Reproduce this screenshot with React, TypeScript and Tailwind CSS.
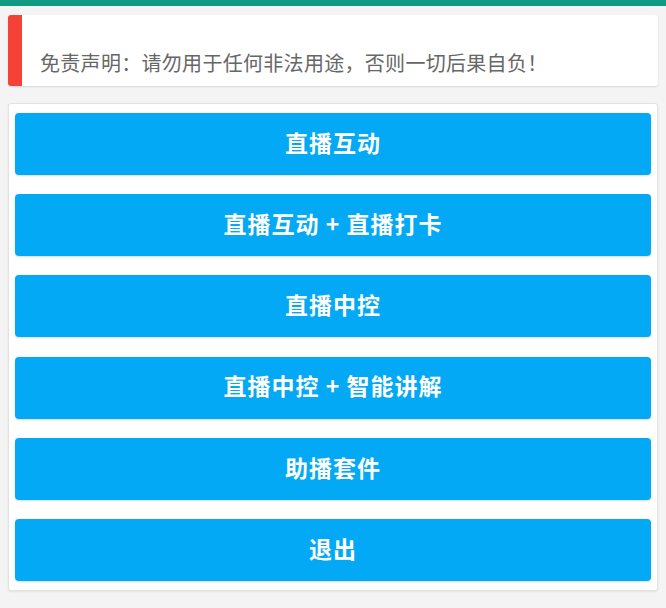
const buttons = [
  "直播互动",
  "直播互动 + 直播打卡",
  "直播中控",
  "直播中控 + 智能讲解",
  "助播套件",
  "退出",
];

export default function App() {
  return (
    <div
      className="min-h-[608px] bg-[#f4f4f4]"
      style={{ fontFamily: '"Noto Sans CJK SC", "Noto Sans", sans-serif' }}
    >
      <div className="h-[6px] bg-[#119a82]" />

      <div className="px-2 pt-[9px]">
        {/* disclaimer */}
        <div className="flex h-[71px] rounded-[3px] bg-white shadow-[0_1px_2px_rgba(0,0,0,0.12)]">
          <div className="w-[14px] rounded-l-[3px] bg-[#f44336]" />
          <div className="flex flex-1 items-end pb-[9px] pl-[18px]">
            <p className="text-[20px] leading-[28px] tracking-[0.3px] text-[#666]">
              免责声明：请勿用于任何非法用途，否则一切后果自负！
            </p>
          </div>
        </div>

        {/* menu */}
        <div className="mt-[17px] flex flex-col gap-[19.2px] rounded-[3px] border border-[#e2e2e2] bg-white px-[6px] py-[9px] shadow-[0_1px_2px_rgba(0,0,0,0.08)]">
          {buttons.map((label) => (
            <button
              key={label}
              className="flex h-[62px] items-center justify-center rounded-[4px] bg-[#03a9f4] pb-1 text-[23px] font-bold tracking-[1px] text-white shadow-[0_1px_2px_rgba(0,0,0,0.15)]"
            >
              {label}
            </button>
          ))}
        </div>
      </div>
    </div>
  );
}
